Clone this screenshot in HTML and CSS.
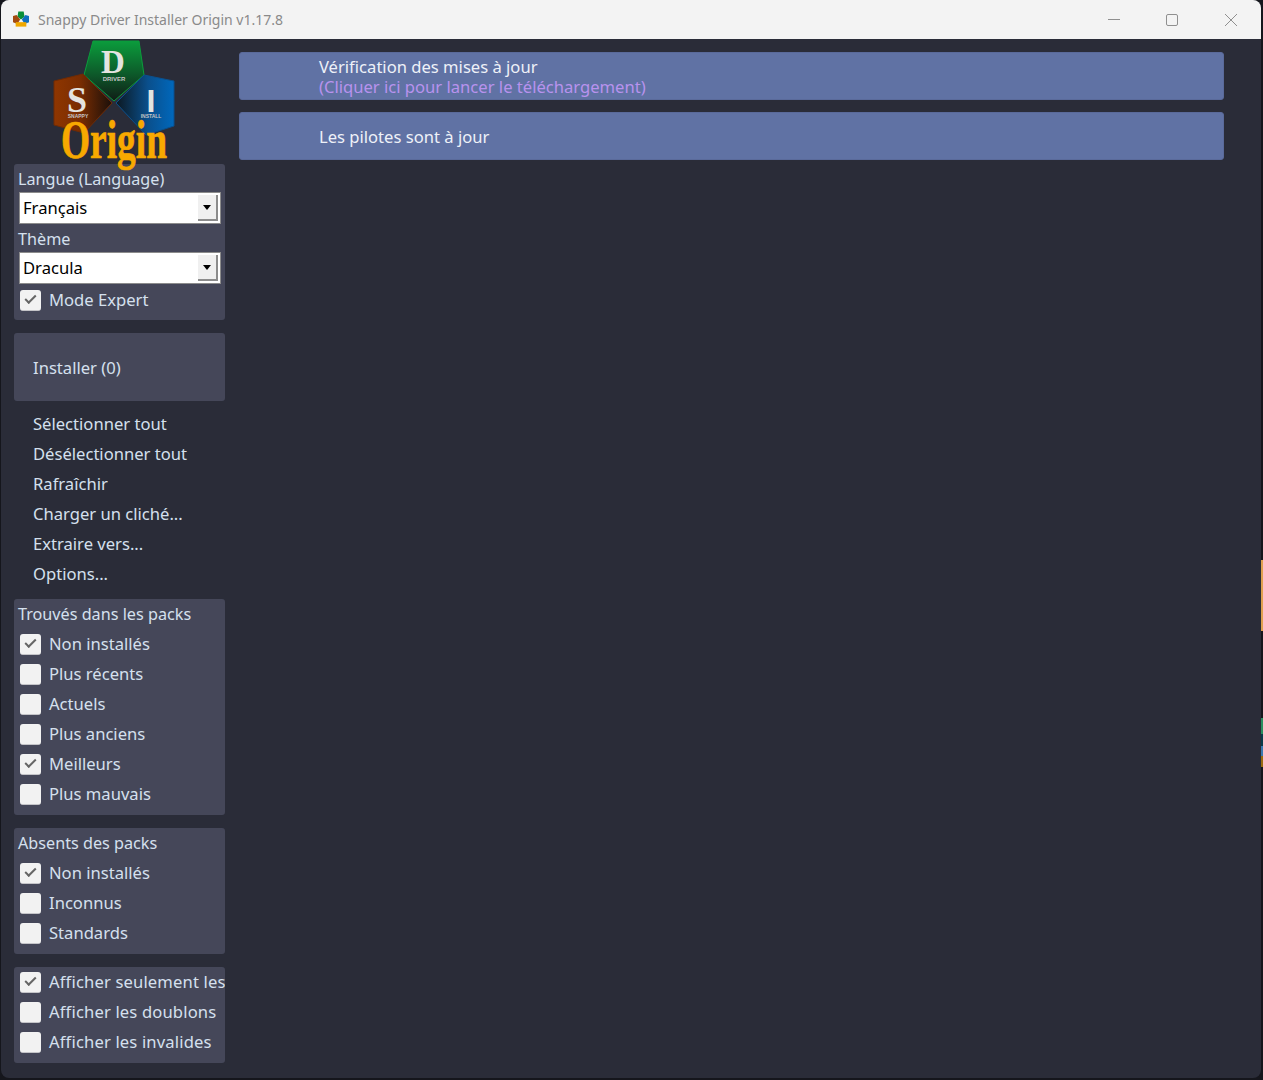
FILE: index.html
```html
<!DOCTYPE html>
<html lang="fr">
<head>
    <meta charset="utf-8">
    <title>Snappy Driver Installer Origin</title>
    <link rel="stylesheet" href="styles.css">
</head>
<body>
    <div class="window">
        <div class="titlebar">
            <svg class="app-icon" viewBox="0 0 18 18">
                <polygon points="6,0 12,0 13,6 9,9 5,6" fill="#0a8f3a"/>
                <polygon points="0,5 4,4 8,9 5,14 0,12" fill="#a34a10"/>
                <polygon points="10,9 14,4 18,5 18,12 13,14" fill="#0f6fc0"/>
                <rect x="3" y="12" width="12" height="5" fill="#f0a800"/>
            </svg>
            <span class="app-title">Snappy Driver Installer Origin v1.17.8</span>
            <div class="win-buttons">
                <svg class="win-btn" viewBox="0 0 12 39"><path d="M0 19.5h12" stroke="#8f8f8f" fill="none"/></svg>
                <svg class="win-btn" viewBox="0 0 12 39"><rect x="0.5" y="14.5" width="11" height="11" rx="1.5" stroke="#8f8f8f" fill="none"/></svg>
                <svg class="win-btn win-close" viewBox="0 0 12 39"><path d="M0 14l12 12M12 14L0 26" stroke="#8f8f8f" fill="none"/></svg>
            </div>
        </div>
        <div class="content">
            <div class="sidebar">
                <svg class="logo" viewBox="0 0 126 123">
                    <defs>
                        <linearGradient id="greenFill" x1="0" y1="0" x2="0" y2="1">
                            <stop offset="0" stop-color="#0b9c3c"/>
                            <stop offset="0.55" stop-color="#0d5a2a"/>
                            <stop offset="1" stop-color="#101c16"/>
                        </linearGradient>
                        <linearGradient id="redFill" x1="0" y1="0" x2="1" y2="0">
                            <stop offset="0" stop-color="#8f3600"/>
                            <stop offset="0.45" stop-color="#7a2d02"/>
                            <stop offset="1" stop-color="#1a0f0a"/>
                        </linearGradient>
                        <linearGradient id="blueFill" x1="1" y1="0" x2="0" y2="0">
                            <stop offset="0" stop-color="#0068bc"/>
                            <stop offset="0.45" stop-color="#0a4f8c"/>
                            <stop offset="1" stop-color="#0c1820"/>
                        </linearGradient>
                    </defs>
                    <polygon points="41,0 87,0 92,34 62,60 32,34" fill="url(#greenFill)" stroke="#0b9c3c"/>
                    <polygon points="2,40 31,33 60,62 32,92 2,84" fill="url(#redFill)" stroke="#6e2a04"/>
                    <polygon points="64,62 92,34 122,40 122,85 94,94" fill="url(#blueFill)" stroke="#0a4f8c"/>
                    <text class="logo-letter" x="61" y="32" font-size="33" text-anchor="middle">D</text>
                    <text class="logo-letter" x="25" y="71" font-size="36" text-anchor="middle">S</text>
                    <text class="logo-bar" x="99" y="71" font-size="32" text-anchor="middle">I</text>
                    <text class="logo-small" x="62" y="40" font-size="6" text-anchor="middle">DRIVER</text>
                    <text class="logo-small" x="26" y="77" font-size="5" text-anchor="middle">SNAPPY</text>
                    <text class="logo-small" x="99" y="77" font-size="5" text-anchor="middle">INSTALL</text>
                    <text class="logo-origin" x="9" y="117" font-size="54" textLength="106" lengthAdjust="spacingAndGlyphs">Origin</text>
                </svg>

                <div class="panel panel-first">
                    <div class="row title">Langue (Language)</div>
                    <div class="combo"><span class="combo-value">Français</span><span class="combo-arrow"></span></div>
                    <div class="row title">Thème</div>
                    <div class="combo"><span class="combo-value">Dracula</span><span class="combo-arrow"></span></div>
                    <div class="row check"><span class="box on"></span>Mode Expert</div>
                </div>

                <div class="install">Installer (0)</div>

                <div class="actions">
                    <div class="row action">Sélectionner tout</div>
                    <div class="row action">Désélectionner tout</div>
                    <div class="row action">Rafraîchir</div>
                    <div class="row action">Charger un cliché...</div>
                    <div class="row action">Extraire vers...</div>
                    <div class="row action">Options...</div>
                </div>

                <div class="panel">
                    <div class="row title">Trouvés dans les packs</div>
                    <div class="row check"><span class="box on"></span>Non installés</div>
                    <div class="row check"><span class="box"></span>Plus récents</div>
                    <div class="row check"><span class="box"></span>Actuels</div>
                    <div class="row check"><span class="box"></span>Plus anciens</div>
                    <div class="row check"><span class="box on"></span>Meilleurs</div>
                    <div class="row check"><span class="box"></span>Plus mauvais</div>
                </div>

                <div class="panel">
                    <div class="row title">Absents des packs</div>
                    <div class="row check"><span class="box on"></span>Non installés</div>
                    <div class="row check"><span class="box"></span>Inconnus</div>
                    <div class="row check"><span class="box"></span>Standards</div>
                </div>

                <div class="panel panel-last">
                    <div class="row check"><span class="box on"></span>Afficher seulement les</div>
                    <div class="row check"><span class="box"></span>Afficher les doublons</div>
                    <div class="row check"><span class="box"></span>Afficher les invalides</div>
                </div>
            </div>

            <div class="main">
                <div class="bar">
                    <div>Vérification des mises à jour</div>
                    <div class="bar-link">(Cliquer ici pour lancer le téléchargement)</div>
                </div>
                <div class="bar">
                    <div>Les pilotes sont à jour</div>
                </div>
            </div>
        </div>
    </div>
</body>
</html>
```

FILE: styles.css
```css
html, body {
    margin: 0;
    height: 1080px;
    overflow: hidden;
}

body {
    font-family: "Noto Sans", sans-serif;
    font-size: 16.6px;
    color: #d5e0ee;
    background-color: #15161c;
    /* bits of the desktop showing past the window edge */
    background-image: linear-gradient(to bottom,
        transparent 560px, #e0a050 560px, #e0a050 631px, transparent 631px,
        transparent 718px, #2a8f60 718px, #2a8f60 734px, #0a3a4a 734px, #0a3a4a 746px,
        #3a78b0 746px, #3a78b0 756px, #9a6a10 756px, #9a6a10 767px, transparent 767px);
    background-repeat: no-repeat;
    background-position: right top;
    background-size: 2px 100%;
}

.window {
    width: 1260px;
    height: 1078px;
    margin-left: 1px;
    background-color: #2a2c38;
    border-radius: 8px;
    overflow: hidden;
}

.titlebar {
    display: flex;
    align-items: center;
    height: 39px;
    background-color: #f3f3f3;
}

.app-icon {
    width: 16px;
    height: 17px;
    margin-left: 12px;
}

.app-title {
    margin-left: 9px;
    font-size: 14px;
    color: #8a8a8a;
}

.win-buttons {
    display: flex;
    gap: 46px;
    margin-left: auto;
    padding-right: 24px;
}

.win-btn {
    display: block;
    width: 12px;
    height: 39px;
}

.win-close {
    margin-left: 1px;
}

.content {
    display: flex;
}

.sidebar {
    width: 211px;
    margin-left: 13px;
}

.logo {
    display: block;
    width: 126px;
    height: 123px;
    margin: 2px 0 0 38px;
    overflow: visible;
}

.logo-letter {
    font-family: "Liberation Serif", serif;
    font-weight: bold;
    fill: #e4e4e0;
}

.logo-bar {
    font-family: "Liberation Sans", sans-serif;
    font-weight: bold;
    fill: #e4e4e0;
}

.logo-small {
    font-family: "Liberation Sans", sans-serif;
    font-weight: bold;
    fill: #c4c4c4;
}

.logo-origin {
    font-family: "Liberation Serif", serif;
    font-weight: bold;
    fill: #f8a900;
    stroke: #f8a900;
    stroke-width: 0.7;
}

.panel {
    padding-bottom: 6px;
    margin-bottom: 13px;
    background-color: #454759;
    border-radius: 3px;
    overflow: hidden;
}

.panel-first {
    padding-bottom: 5px;
}

.panel-first .title {
    height: 28px;
    padding-top: 2px;
    padding-bottom: 0;
    box-sizing: border-box;
}

.panel-first .check {
    margin-top: 1px;
}

.panel-last {
    letter-spacing: 0.15px;
}

.row {
    display: flex;
    align-items: center;
    height: 28px;
    padding-bottom: 2px;
    white-space: nowrap;
}

.title {
    height: 30px;
    padding-bottom: 0;
    padding-left: 4px;
    font-size: 16.2px;
}

.check {
    padding-left: 6px;
}

.box {
    flex: none;
    position: relative;
    width: 21px;
    height: 21px;
    margin: 2px 8px 0 0;
    background-color: #f2f2f2;
    border-bottom: 1px solid #c4c4c8;
    border-radius: 3px;
    box-sizing: border-box;
}

.box.on::after {
    content: "";
    position: absolute;
    left: 5px;
    top: 5px;
    width: 9px;
    height: 4px;
    border-left: 2.5px solid #666;
    border-bottom: 2.5px solid #666;
    transform: rotate(-45deg);
}

.combo {
    display: flex;
    align-items: center;
    height: 32px;
    margin: 0 4px 0 5px;
    padding-bottom: 1px;
    background-color: #fff;
    border: 1px solid #8c8c8c;
    box-sizing: border-box;
    color: #000;
}

.combo-value {
    flex: 1;
    padding-left: 3px;
}

.combo-arrow {
    position: relative;
    width: 20px;
    height: 26px;
    margin: 1px 2px 0 0;
    background-color: #f0f0f0;
    border-right: 2px solid #8c8c8c;
    border-bottom: 2px solid #8c8c8c;
    box-sizing: border-box;
}

.combo-arrow::after {
    content: "";
    position: absolute;
    left: 5px;
    top: 10px;
    border-style: solid;
    border-width: 5px 4.5px 0;
    border-color: #000 transparent transparent;
}

.install {
    display: flex;
    align-items: center;
    height: 68px;
    padding-left: 19px;
    background-color: #454759;
    border-radius: 3px;
}

.actions {
    margin: 8px 0 10px;
}

.action {
    padding-left: 19px;
}

.main {
    flex: 1;
    display: flex;
    flex-direction: column;
    gap: 12px;
    padding: 13px 37px 0 14px;
}

.bar {
    display: flex;
    flex-direction: column;
    justify-content: center;
    height: 48px;
    padding: 1px 0 0 79px;
    line-height: 20px;
    color: #eef1f8;
    background-color: #6072a4;
    border: 1px solid #5a6a9a;
    border-radius: 3px;
    box-sizing: border-box;
}

.bar-link {
    color: #b892ee;
}
```
